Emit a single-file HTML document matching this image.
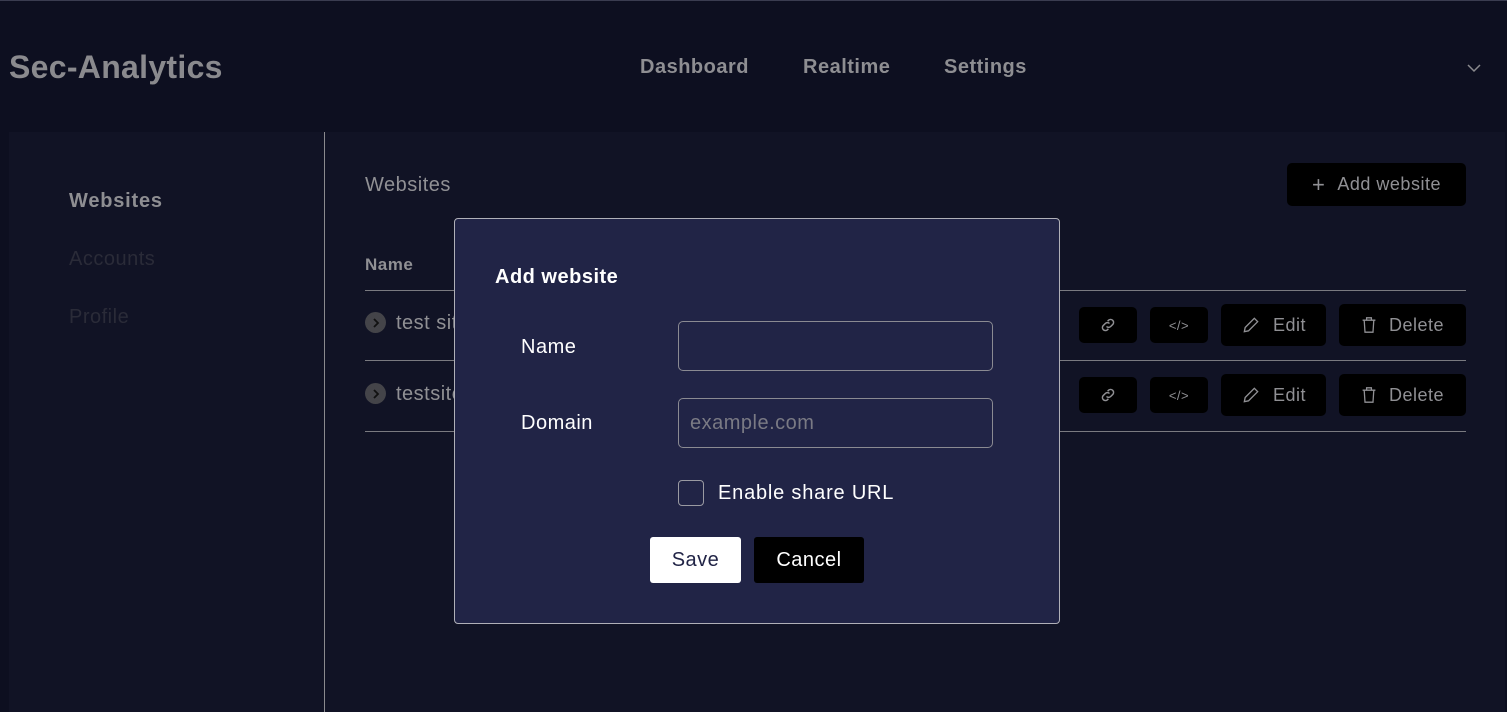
<!DOCTYPE html>
<html><head><meta charset="utf-8"><style>
*{box-sizing:border-box;margin:0;padding:0}
body{width:1507px;height:712px;overflow:hidden;background:#0d0f20;font-family:"Liberation Sans",sans-serif;position:relative;letter-spacing:0.5px}
.a{position:absolute;white-space:nowrap}
.topline{left:0;top:0;width:1507px;height:1px;background:#3a3c50}
.logo{left:9px;top:49px;font-size:32px;font-weight:bold;color:#8a8a8e;letter-spacing:0.3px}
.nav{top:56px;font-size:20px;font-weight:bold;color:#8e8e92}
.panel{left:9px;top:132px;width:1496px;height:580px;background:#111325}
.vdiv{left:324px;top:132px;width:1px;height:580px;background:#8a8a8e}
.side{left:69px;font-size:20px}
.hline{left:365px;width:1101px;height:1px;background:#7a7a80}
.btn{background:#000;border-radius:5px;color:#909094;font-size:18px;display:flex;align-items:center;justify-content:center;gap:12px}
.modal{left:454px;top:218px;width:606px;height:406px;background:#212446;border:1px solid #b0b0b8;border-radius:4px}
.lbl{color:#fff;font-size:20px}
.inp{border:1px solid #8a8a92;border-radius:5px;width:315px;height:50px}
.chev{border-radius:50%;background:#444449;width:21px;height:21px;display:flex;align-items:center;justify-content:center}
</style></head><body>
<div class="a topline"></div>
<div class="a logo">Sec-Analytics</div>
<div class="a nav" style="left:640px">Dashboard</div>
<div class="a nav" style="left:803px">Realtime</div>
<div class="a nav" style="left:944px">Settings</div>
<svg class="a" style="left:1466px;top:63px" width="16" height="10" viewBox="0 0 16 10"><path d="M2 2l6 6 6-6" fill="none" stroke="#8a8a8e" stroke-width="1.5"/></svg>
<div class="a panel"></div>
<div class="a vdiv"></div>
<div class="a side" style="top:190px;font-weight:bold;color:#8e8e92;letter-spacing:0.8px">Websites</div>
<div class="a side" style="top:248px;color:#2a2b38">Accounts</div>
<div class="a side" style="top:306px;color:#2a2b38">Profile</div>
<div class="a" style="left:365px;top:174px;font-size:20px;color:#909094">Websites</div>
<div class="a btn" style="left:1287px;top:163px;width:179px;height:43px"><span style="font-size:22px">+</span><span>Add website</span></div>
<div class="a" style="left:365px;top:255px;font-size:17px;font-weight:bold;color:#909094">Name</div>
<div class="a hline" style="top:290px"></div>
<div class="a hline" style="top:360px"></div>
<div class="a hline" style="top:431px"></div>
<div class="a chev" style="left:365px;top:312px"><svg width="8" height="10" viewBox="0 0 8 10"><path d="M2 1l4 4-4 4" fill="none" stroke="#111" stroke-width="1.8"/></svg></div>
<div class="a" style="left:396px;top:312px;font-size:20px;color:#909094">test site</div>
<div class="a chev" style="left:365px;top:383px"><svg width="8" height="10" viewBox="0 0 8 10"><path d="M2 1l4 4-4 4" fill="none" stroke="#111" stroke-width="1.8"/></svg></div>
<div class="a" style="left:396px;top:383px;font-size:20px;color:#909094">testsite</div>
<div class="a btn" style="left:1079px;top:307px;width:58px;height:36px"><svg width="18" height="18" viewBox="0 0 24 24" fill="none" stroke="#909094" stroke-width="2"><path d="M10 14a4 4 0 0 0 5.6 0l3-3a4 4 0 0 0-5.6-5.6l-1.5 1.5M14 10a4 4 0 0 0-5.6 0l-3 3a4 4 0 0 0 5.6 5.6l1.5-1.5"/></svg></div>
<div class="a btn" style="left:1150px;top:307px;width:58px;height:36px;font-size:13px">&lt;/&gt;</div>
<div class="a btn" style="left:1221px;top:304px;width:105px;height:42px"><svg width="20" height="20" viewBox="0 0 24 24" fill="none" stroke="#909094" stroke-width="1.6"><path d="M4 20l1-5L16 4l4 4L9 19z"/></svg><span>Edit</span></div>
<div class="a btn" style="left:1339px;top:304px;width:127px;height:42px"><svg width="16" height="18" viewBox="0 0 20 22" fill="none" stroke="#909094" stroke-width="1.6"><path d="M2 5h16M7 5V2h6v3M4 5l1 15h10l1-15"/></svg><span>Delete</span></div>
<div class="a btn" style="left:1079px;top:377px;width:58px;height:36px"><svg width="18" height="18" viewBox="0 0 24 24" fill="none" stroke="#909094" stroke-width="2"><path d="M10 14a4 4 0 0 0 5.6 0l3-3a4 4 0 0 0-5.6-5.6l-1.5 1.5M14 10a4 4 0 0 0-5.6 0l-3 3a4 4 0 0 0 5.6 5.6l1.5-1.5"/></svg></div>
<div class="a btn" style="left:1150px;top:377px;width:58px;height:36px;font-size:13px">&lt;/&gt;</div>
<div class="a btn" style="left:1221px;top:374px;width:105px;height:42px"><svg width="20" height="20" viewBox="0 0 24 24" fill="none" stroke="#909094" stroke-width="1.6"><path d="M4 20l1-5L16 4l4 4L9 19z"/></svg><span>Edit</span></div>
<div class="a btn" style="left:1339px;top:374px;width:127px;height:42px"><svg width="16" height="18" viewBox="0 0 20 22" fill="none" stroke="#909094" stroke-width="1.6"><path d="M2 5h16M7 5V2h6v3M4 5l1 15h10l1-15"/></svg><span>Delete</span></div>
<div class="a modal"></div>
<div class="a" style="left:495px;top:266px;font-size:20px;font-weight:bold;color:#fff">Add website</div>
<div class="a lbl" style="left:521px;top:336px">Name</div>
<div class="a inp" style="left:678px;top:321px"></div>
<div class="a lbl" style="left:521px;top:412px">Domain</div>
<div class="a inp" style="left:678px;top:398px"></div>
<div class="a" style="left:690px;top:412px;font-size:20px;color:#7a7a84">example.com</div>
<div class="a" style="left:678px;top:480px;width:26px;height:26px;border:1px solid #9a9aa2;border-radius:4px"></div>
<div class="a lbl" style="left:718px;top:482px;letter-spacing:0.8px">Enable share URL</div>
<div class="a" style="left:650px;top:537px;width:91px;height:46px;background:#fff;border-radius:3px;display:flex;align-items:center;justify-content:center;font-size:20px;color:#212446">Save</div>
<div class="a" style="left:754px;top:537px;width:110px;height:46px;background:#000;border-radius:3px;display:flex;align-items:center;justify-content:center;font-size:20px;color:#fff">Cancel</div>
</body></html>
